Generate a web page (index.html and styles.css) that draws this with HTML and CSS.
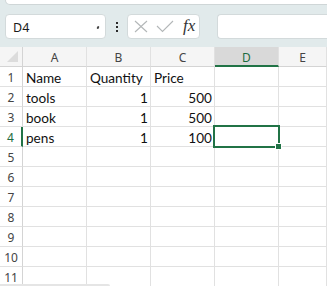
FILE: index.html
```html
<!DOCTYPE html>
<html>
<head>
<meta charset="utf-8">
<link rel="stylesheet" href="styles.css">
</head>
<body>
<div class="app">
  <div class="toolbar">
    <div class="topbox"></div>
    <div class="fbar">
      <div class="namebox"><span class="ref">D4</span><span class="caret"></span></div>
      <div class="dots"><i></i><i></i><i></i></div>
      <div class="fxbox">
        <svg class="ico" width="14" height="13" viewBox="0 0 14 13"><path d="M1 1 L13 12 M13 1 L1 12" stroke="#b3b7b8" stroke-width="1.1" fill="none"/></svg>
        <svg class="ico" width="18" height="13" viewBox="0 0 18 13"><path d="M1 6 L6.5 11.5 L17 1" stroke="#b3b7b8" stroke-width="1.1" fill="none"/></svg>
        <span class="fx">fx</span>
      </div>
      <div class="finput"></div>
    </div>
  </div>
  <div class="sheet">
    <div class="corner"><span class="tri"></span></div>
    <div class="ch">A</div><div class="ch">B</div><div class="ch">C</div><div class="ch sel">D</div><div class="ch">E</div>

    <div class="rh">1</div><div class="c">Name</div><div class="c">Quantity</div><div class="c">Price</div><div class="c"></div><div class="c"></div>
    <div class="rh">2</div><div class="c">tools</div><div class="c n">1</div><div class="c n">500</div><div class="c"></div><div class="c"></div>
    <div class="rh">3</div><div class="c">book</div><div class="c n">1</div><div class="c n">500</div><div class="c"></div><div class="c"></div>
    <div class="rh sel">4</div><div class="c">pens</div><div class="c n">1</div><div class="c n">100</div><div class="c"></div><div class="c"></div>
    <div class="rh">5</div><div class="c"></div><div class="c"></div><div class="c"></div><div class="c"></div><div class="c"></div>
    <div class="rh">6</div><div class="c"></div><div class="c"></div><div class="c"></div><div class="c"></div><div class="c"></div>
    <div class="rh">7</div><div class="c"></div><div class="c"></div><div class="c"></div><div class="c"></div><div class="c"></div>
    <div class="rh">8</div><div class="c"></div><div class="c"></div><div class="c"></div><div class="c"></div><div class="c"></div>
    <div class="rh">9</div><div class="c"></div><div class="c"></div><div class="c"></div><div class="c"></div><div class="c"></div>
    <div class="rh">10</div><div class="c"></div><div class="c"></div><div class="c"></div><div class="c"></div><div class="c"></div>
    <div class="rh">11</div><div class="c"></div><div class="c"></div><div class="c"></div><div class="c"></div><div class="c"></div>

    <div class="selection"><span class="handle"></span></div>
    <div class="hscroll"></div>
  </div>
</div>
</body>
</html>
```

FILE: styles.css
```css
html, body {
  margin: 0;
  padding: 0;
  background: #ffffff;
}
.app {
  width: 327px;
  height: 286px;
  overflow: hidden;
}
.toolbar {
  height: 47px;
  background: #e1eaeb;
  box-sizing: border-box;
  padding-left: 5px;
}
.topbox {
  height: 4px;
  background: #ffffff;
  border: 1px solid #cfd6d7;
  border-top: none;
  border-radius: 0 0 6px 6px;
  margin-right: -8px;
}
.fbar {
  display: flex;
  align-items: center;
  margin-top: 9px;
  height: 25px;
}
.namebox {
  width: 101px;
  height: 25px;
  box-sizing: border-box;
  background: #ffffff;
  border: 1px solid #d3dadb;
  border-radius: 4px;
  display: flex;
  align-items: center;
  justify-content: space-between;
  padding: 0 6px 0 7px;
  font-family: "Noto Sans", "Open Sans", sans-serif;
  font-size: 12.5px;
  color: #1b1b1b;
}
.ref { padding-top: 1px; }
.caret {
  width: 2px;
  height: 3px;
  background: #444;
  border-radius: 1px;
  transform: rotate(30deg);
  margin-top: 1px;
}
.dots {
  width: 21px;
  display: flex;
  flex-direction: column;
  align-items: center;
  gap: 2px;
}
.dots i {
  display: block;
  width: 2px;
  height: 2px;
  background: #2a2a2a;
}
.fxbox {
  width: 73px;
  height: 25px;
  box-sizing: border-box;
  background: #ffffff;
  border: 1px solid #d3dadb;
  border-radius: 4px;
  display: flex;
  align-items: center;
  padding-left: 6px;
  gap: 8px;
}
.fx {
  font-family: "Liberation Serif", "DejaVu Serif", serif;
  font-style: italic;
  font-size: 17px;
  color: #333333;
  margin-left: 1px;
  line-height: 1;
  padding-bottom: 2px;
}
.finput {
  flex: 1;
  margin-left: 17px;
  height: 25px;
  box-sizing: border-box;
  background: #ffffff;
  border: 1px solid #d3dadb;
  border-right: none;
  border-radius: 4px 0 0 4px;
}
.sheet {
  position: relative;
  display: grid;
  grid-template-columns: 23px 64px 64px 64px 64px 48px;
  grid-template-rows: 20px repeat(11, 20px);
}
.sheet > div {
  box-sizing: border-box;
  border-right: 1px solid #e1e1e1;
  border-bottom: 1px solid #e1e1e1;
}
.corner {
  background: #f5f5f5;
  position: relative;
}
.sheet > .corner {
  border-right: 1px solid #d4d4d4;
  border-bottom: 1px solid #d4d4d4;
}
.tri {
  position: absolute;
  right: 4px;
  bottom: 4px;
  width: 0;
  height: 0;
  border-left: 11px solid transparent;
  border-bottom: 11px solid #dcdcdc;
}
.ch {
  background: #f5f5f5;
  font-family: "Noto Sans", "Open Sans", sans-serif;
  font-size: 12px;
  color: #444444;
  text-align: center;
  line-height: 21px;
}
.sheet > .ch {
  border-bottom: 1px solid #d4d4d4;
}
.sheet > .ch.sel {
  background: #d9d9d9;
  color: #1d6b40;
  border-bottom: 2px solid #217346;
}
.rh {
  background: #ffffff;
  font-family: "Noto Sans", "Open Sans", sans-serif;
  font-size: 12px;
  color: #444444;
  text-align: center;
  line-height: 21px;
}
.sheet > .rh {
  border-right: 1px solid #d4d4d4;
}
.sheet > .rh.sel {
  color: #1d6b40;
  border-right: 2px solid #217346;
}
.c {
  font-family: Lato, "Liberation Sans", sans-serif;
  font-size: 13.6px;
  color: #111111;
  padding: 0 2px 0 3px;
  line-height: 22px;
  white-space: nowrap;
}
.n { text-align: right; }
.selection {
  position: absolute;
  left: 213px;
  top: 78px;
  width: 67px;
  height: 23px;
  box-sizing: border-box;
  border: 2px solid #217346;
}
.sheet > .selection {
  border: 2px solid #217346;
}
.handle {
  position: absolute;
  right: -4px;
  bottom: -4px;
  width: 5px;
  height: 5px;
  background: #217346;
  border: 1px solid #ffffff;
}
.sheet > .hscroll {
  position: absolute;
  left: 0;
  top: 237px;
  width: 110px;
  height: 3px;
  background: #e5e5e5;
  border: none;
  border-radius: 0 2px 0 0;
}
```
